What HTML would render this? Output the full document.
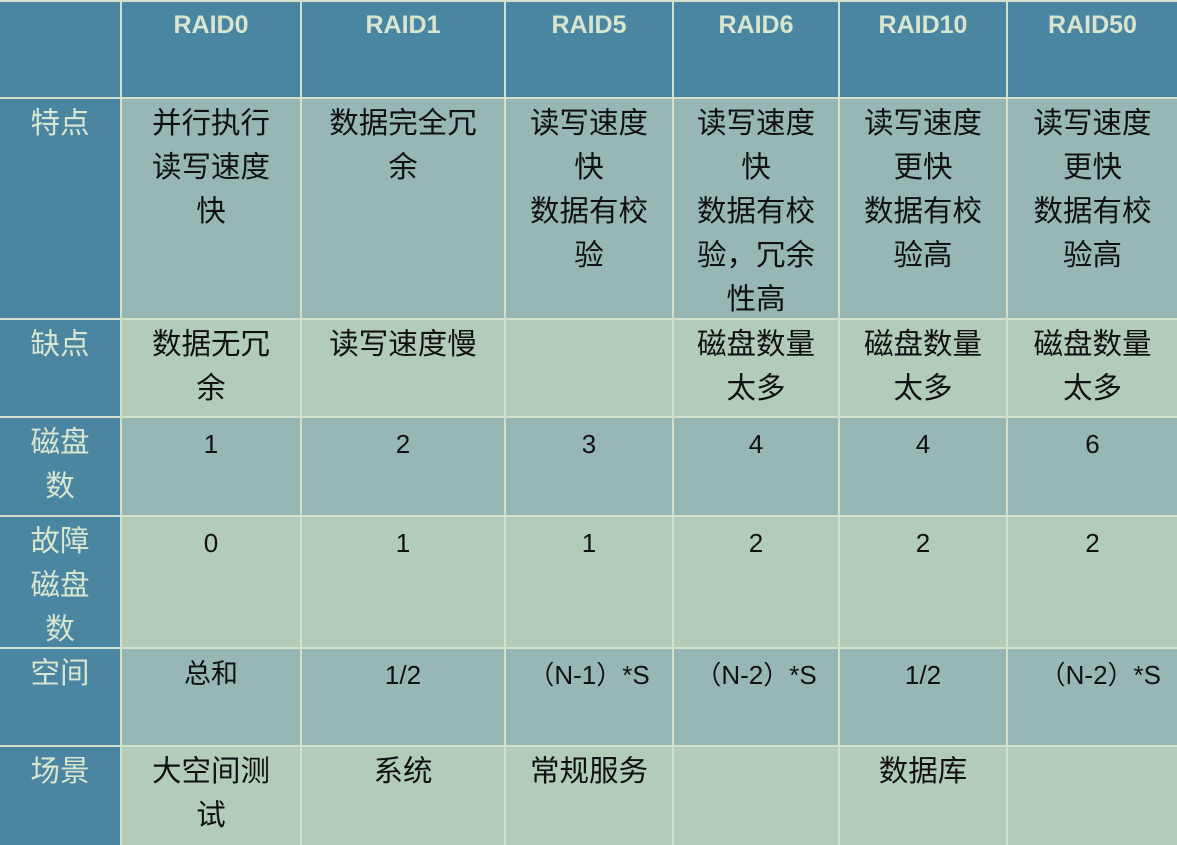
<!DOCTYPE html>
<html><head><meta charset="utf-8"><style>
body{margin:0;width:1177px;height:845px;background:#d3e0cc;position:relative;overflow:hidden;font-family:"Liberation Sans","Noto Sans CJK SC",sans-serif}
.c{position:absolute;box-sizing:border-box;text-align:center;white-space:nowrap;font-size:29.5px;line-height:44px;padding-top:3px;color:#111}
.h{background:#4a85a2;color:#d8e6cf}
.hd{font-weight:bold;font-size:25px;line-height:46px;padding-top:0}
.d{background:#96b7b4}
.l{background:#b3ccb9}
.n{font-size:26px;line-height:44px;padding-top:4px}
</style></head><body>
<div class="c h" style="left:0;top:2px;width:120px;height:95px"></div>
<div class="c h hd" style="left:122px;top:2px;width:178px;height:95px">RAID0</div>
<div class="c h hd" style="left:302px;top:2px;width:202px;height:95px">RAID1</div>
<div class="c h hd" style="left:506px;top:2px;width:166px;height:95px">RAID5</div>
<div class="c h hd" style="left:674px;top:2px;width:164px;height:95px">RAID6</div>
<div class="c h hd" style="left:840px;top:2px;width:166px;height:95px">RAID10</div>
<div class="c h hd" style="left:1008px;top:2px;width:169px;height:95px">RAID50</div>
<div class="c h" style="left:0;top:99px;width:120px;height:219px">特点</div>
<div class="c d" style="left:122px;top:99px;width:178px;height:219px">并行执行<br>读写速度<br>快</div>
<div class="c d" style="left:302px;top:99px;width:202px;height:219px">数据完全冗<br>余</div>
<div class="c d" style="left:506px;top:99px;width:166px;height:219px">读写速度<br>快<br>数据有校<br>验</div>
<div class="c d" style="left:674px;top:99px;width:164px;height:219px">读写速度<br>快<br>数据有校<br>验，冗余<br>性高</div>
<div class="c d" style="left:840px;top:99px;width:166px;height:219px">读写速度<br>更快<br>数据有校<br>验高</div>
<div class="c d" style="left:1008px;top:99px;width:169px;height:219px">读写速度<br>更快<br>数据有校<br>验高</div>
<div class="c h" style="left:0;top:320px;width:120px;height:96px">缺点</div>
<div class="c l" style="left:122px;top:320px;width:178px;height:96px">数据无冗<br>余</div>
<div class="c l" style="left:302px;top:320px;width:202px;height:96px">读写速度慢</div>
<div class="c l" style="left:506px;top:320px;width:166px;height:96px"></div>
<div class="c l" style="left:674px;top:320px;width:164px;height:96px">磁盘数量<br>太多</div>
<div class="c l" style="left:840px;top:320px;width:166px;height:96px">磁盘数量<br>太多</div>
<div class="c l" style="left:1008px;top:320px;width:169px;height:96px">磁盘数量<br>太多</div>
<div class="c h" style="left:0;top:418px;width:120px;height:97px">磁盘<br>数</div>
<div class="c d n" style="left:122px;top:418px;width:178px;height:97px">1</div>
<div class="c d n" style="left:302px;top:418px;width:202px;height:97px">2</div>
<div class="c d n" style="left:506px;top:418px;width:166px;height:97px">3</div>
<div class="c d n" style="left:674px;top:418px;width:164px;height:97px">4</div>
<div class="c d n" style="left:840px;top:418px;width:166px;height:97px">4</div>
<div class="c d n" style="left:1008px;top:418px;width:169px;height:97px">6</div>
<div class="c h" style="left:0;top:517px;width:120px;height:130px">故障<br>磁盘<br>数</div>
<div class="c l n" style="left:122px;top:517px;width:178px;height:130px">0</div>
<div class="c l n" style="left:302px;top:517px;width:202px;height:130px">1</div>
<div class="c l n" style="left:506px;top:517px;width:166px;height:130px">1</div>
<div class="c l n" style="left:674px;top:517px;width:164px;height:130px">2</div>
<div class="c l n" style="left:840px;top:517px;width:166px;height:130px">2</div>
<div class="c l n" style="left:1008px;top:517px;width:169px;height:130px">2</div>
<div class="c h" style="left:0;top:649px;width:120px;height:96px">空间</div>
<div class="c d" style="left:122px;top:649px;width:178px;height:96px;font-size:27px">总和</div>
<div class="c d n" style="left:302px;top:649px;width:202px;height:96px">1/2</div>
<div class="c d n" style="left:506px;top:649px;width:166px;height:96px">（N-1）*S</div>
<div class="c d n" style="left:674px;top:649px;width:164px;height:96px">（N-2）*S</div>
<div class="c d n" style="left:840px;top:649px;width:166px;height:96px">1/2</div>
<div class="c d n" style="left:1008px;top:649px;width:169px;height:96px;text-align:right;padding-right:16px">（N-2）*S</div>
<div class="c h" style="left:0;top:747px;width:120px;height:98px">场景</div>
<div class="c l" style="left:122px;top:747px;width:178px;height:98px">大空间测<br>试</div>
<div class="c l" style="left:302px;top:747px;width:202px;height:98px">系统</div>
<div class="c l" style="left:506px;top:747px;width:166px;height:98px">常规服务</div>
<div class="c l" style="left:674px;top:747px;width:164px;height:98px"></div>
<div class="c l" style="left:840px;top:747px;width:166px;height:98px">数据库</div>
<div class="c l" style="left:1008px;top:747px;width:169px;height:98px"></div>
</body></html>
